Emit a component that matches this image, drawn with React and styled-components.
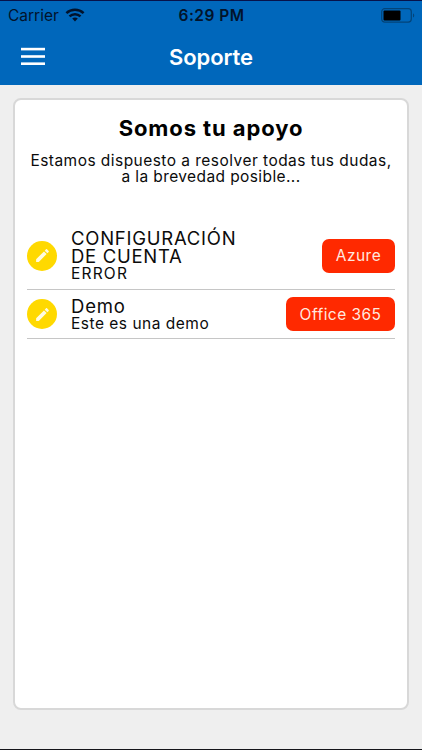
import React from "react";
import styled, { createGlobalStyle } from "styled-components";

const GlobalStyle = createGlobalStyle`
    *{
        box-sizing:border-box;
    }
    body{
        margin:0;
        background:#efefef;
        color:#0b0b0b;
        font-family:Inter, "Open Sans", sans-serif;
    }
`;

const Screen = styled.div`
    display:flex;
    flex-direction:column;
    height:750px;
    border-top:1px solid #07124a;
    border-bottom:1px solid #15151a;
    overflow:hidden;
`;

const Header = styled.header`
    height:84px;
    flex:none;
    background:#0067bb;
`;

const StatusBar = styled.div`
    display:grid;
    grid-template-columns:1fr auto 1fr;
    align-items:center;
    height:28px;
    padding:0 7px 0 8px;
    color:#02132b;
    font-size:15.5px;
`;

const Carrier = styled.div`
    display:flex;
    align-items:center;
    gap:6px;
`;

const Clock = styled.div`
    font-weight:600;
    letter-spacing:0.45px;
`;

const Battery = styled.svg`
    justify-self:end;
`;

const NavBar = styled.div`
    display:grid;
    grid-template-columns:1fr auto 1fr;
    align-items:center;
    height:54px;
    padding:0 21px;
`;

const MenuButton = styled.button`
    display:flex;
    width:24px;
    padding:0;
    border:0;
    background:none;
`;

const NavTitle = styled.h1`
    margin:2px 0 0;
    color:#fff;
    font-size:22px;
    line-height:28px;
    font-weight:600;
    letter-spacing:-0.1px;
`;

const Card = styled.main`
    flex:1;
    margin:13px 13px 39px;
    padding:13px 12px;
    background:#fff;
    border:2px solid #d8d8d8;
    border-radius:8px;
`;

const Heading = styled.h2`
    margin:0;
    color:#000;
    font-size:22px;
    line-height:30px;
    font-weight:700;
    text-align:center;
    letter-spacing:0.9px;
`;

const Text = styled.p`
    margin:10px -12px 0;
    font-size:15.5px;
    line-height:16px;
    text-align:center;
    white-space:nowrap;
`;

const List = styled.ul`
    margin:37px 0 0;
    padding:0;
    list-style:none;
`;

const ListItem = styled.li`
    display:flex;
    align-items:center;
    height:${props => props.$height};
    border-bottom:1px solid #c6c6c6;
`;

const EditButton = styled.button`
    display:flex;
    align-items:center;
    justify-content:center;
    flex:none;
    width:30px;
    height:30px;
    margin-right:14px;
    padding:0;
    border:0;
    border-radius:50%;
    background:#ffd900;
`;

const Info = styled.div`
    flex:1;
    white-space:nowrap;
`;

const Name = styled.div`
    font-size:18.5px;
    line-height:18px;
`;

const Detail = styled.div`
    font-size:15.5px;
    line-height:17px;
`;

const Line = styled.span`
    display:block;
    letter-spacing:${props => props.$spacing};
`;

const Tag = styled.button`
    flex:none;
    width:${props => props.$width};
    height:34px;
    padding:0;
    border:0;
    border-radius:7px;
    background:#ff2900;
    color:#ffe7df;
    font-family:inherit;
    font-size:15.5px;
    letter-spacing:0.45px;
`;

const Wifi = () => (
    <svg width="20" height="14" viewBox="0 0 20 14" fill="none" stroke="#02132b" strokeWidth="2.6">
        <path d="M1.4 5.1C6.2.7 13.8.7 18.6 5.1" />
        <path d="M4.5 8.4c3.1-2.9 7.9-2.9 11 0" />
        <path d="M7.2 10.5c1.6-1.4 4-1.4 5.6 0L10 13.4z" fill="#02132b" stroke="none" />
    </svg>
);

const Menu = () => (
    <svg width="24" height="19" viewBox="0 0 24 19" fill="#fff">
        <rect y="0.8" width="24" height="2.6" />
        <rect y="8.2" width="24" height="2.6" />
        <rect y="15.4" width="24" height="2.6" />
    </svg>
);

const Pencil = () => (
    <svg width="17" height="17" viewBox="0 0 24 24" fill="#fffbe0">
        <path d="M3 17.25V21h3.75L17.81 9.94l-3.75-3.75L3 17.25zM20.71 7.04c.39-.39.39-1.02 0-1.41l-2.34-2.34c-.39-.39-1.02-.39-1.41 0l-1.83 1.83 3.75 3.75 1.83-1.83z" />
    </svg>
);

const tickets = [
    {
        name: [["CONFIGURACIÓN", "0.75px"], ["DE CUENTA", "0.7px"]],
        detail: ["ERROR", "1.2px"],
        tag: "Azure",
        width: "73px",
        height: "68px"
    },
    {
        name: [["Demo", "0.8px"]],
        detail: ["Este es una demo", "0.5px"],
        tag: "Office 365",
        width: "109px",
        height: "49px"
    }
];

export default () => (
    <Screen>
        <GlobalStyle />
        <Header>
            <StatusBar>
                <Carrier>Carrier <Wifi /></Carrier>
                <Clock>6:29 PM</Clock>
                <Battery width="34" height="15" viewBox="0 0 34 15">
                    <rect x="0.7" y="0.7" width="29.6" height="13.4" rx="3" fill="none" stroke="#034479" strokeWidth="1.2" />
                    <rect x="2.5" y="2.5" width="17" height="10" rx="1" fill="#000" />
                    <path d="M32 5.2c1.7.7 1.7 3.7 0 4.4z" fill="#034479" />
                </Battery>
            </StatusBar>
            <NavBar>
                <MenuButton><Menu /></MenuButton>
                <NavTitle>Soporte</NavTitle>
            </NavBar>
        </Header>
        <Card>
            <Heading>Somos tu apoyo</Heading>
            <Text>
                <Line $spacing="0.46px">Estamos dispuesto a resolver todas tus dudas,</Line>
                <Line $spacing="0.4px">a la brevedad posible...</Line>
            </Text>
            <List>
                {tickets.map(ticket => (
                    <ListItem key={ticket.tag} $height={ticket.height}>
                        <EditButton><Pencil /></EditButton>
                        <Info>
                            <Name>
                                {ticket.name.map(([text, spacing]) => (
                                    <Line key={text} $spacing={spacing}>{text}</Line>
                                ))}
                            </Name>
                            <Detail>
                                <Line $spacing={ticket.detail[1]}>{ticket.detail[0]}</Line>
                            </Detail>
                        </Info>
                        <Tag $width={ticket.width}>{ticket.tag}</Tag>
                    </ListItem>
                ))}
            </List>
        </Card>
    </Screen>
);
